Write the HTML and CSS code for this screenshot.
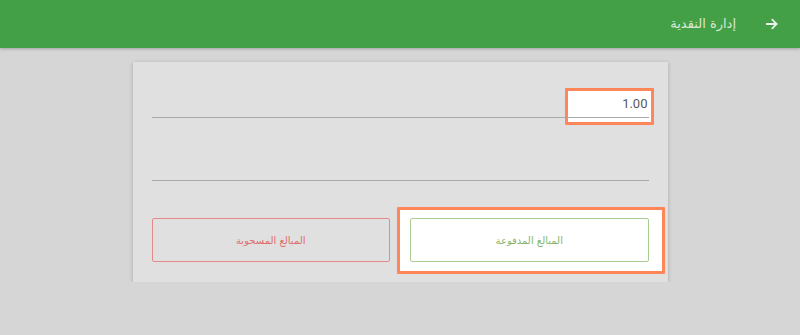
FILE: index.html
```html
<!DOCTYPE html>
<html lang="ar" dir="rtl">
<head>
    <meta charset="UTF-8">
    <meta name="viewport" content="width=device-width, initial-scale=1.0">
    <title>إدارة النقدية</title>
    <link rel="stylesheet" href="styles.css">
</head>
<body>
    <!-- شريط العنوان -->
    <div class="barra">
        <svg class="freccia" width="13" height="12" viewBox="0 0 13 12">
            <path d="M1 6 H11.5 M6.8 1.2 L11.6 6 L6.8 10.8" fill="none" stroke="#e8f2e8" stroke-width="1.8"/>
        </svg>
        <span class="titolo">إدارة النقدية</span>
    </div>
    <!-- البطاقة -->
    <div class="scheda">
        <div class="campo primo">
            <div class="evidenza piccola"></div>
            <input type="text" class="valore" value="1.00" dir="ltr">
            <div class="linea"></div>
        </div>
        <div class="campo secondo">
            <input type="text" class="valore" value="" dir="ltr">
            <div class="linea"></div>
        </div>
        <div class="bottoni">
            <div class="cella">
                <div class="evidenza grande"></div>
                <button class="tasto verde">المبالغ المدفوعة</button>
            </div>
            <div class="cella">
                <button class="tasto rosso">المبالغ المسحوبة</button>
            </div>
        </div>
    </div>
</body>
</html>
```

FILE: styles.css
```css
:root{
    --bg-color: #d6d6d6;
    --card-color: #e0e0e0;
    --green: #43a047;
    --orange: #ff8659;
    --line-color: #a8a8a8;
}
body{
    margin: 0;
    background-color: var(--bg-color);
    font-family: "DejaVu Sans", "Noto Sans", sans-serif;
}
.barra{
    height: 48px;
    background-color: var(--green);
    box-shadow: 0 1px 3px rgba(0,0,0,.25);
    display: flex;
    align-items: center;
    padding-right: 22px;
    gap: 29px;
}
.freccia{
    display: block;
}
.titolo{
    color: #d6e8d6;
    font-size: 13px;
    padding-bottom: 2px;
}
.scheda{
    width: 497px;
    margin: 14px auto 0;
    padding: 0 19px 20px;
    background-color: var(--card-color);
    box-shadow: 0 1px 4px rgba(0,0,0,.22);
}
.campo{
    position: relative;
    display: flex;
    flex-direction: column;
    justify-content: flex-end;
}
.primo{
    height: 56px;
}
.secondo{
    height: 63px;
}
.valore{
    position: relative;
    z-index: 1;
    background: transparent;
    border: 0;
    outline: none;
    padding: 0 1px 6px 0;
    font-family: Roboto, "Liberation Sans", sans-serif;
    font-size: 13px;
    color: #5a5a5a;
    text-align: right;
}
.linea{
    position: relative;
    z-index: 1;
    height: 1px;
    background-color: var(--line-color);
}
.evidenza{
    position: absolute;
    background-color: #ffffff;
    border: 3px solid var(--orange);
    box-sizing: border-box;
    border-radius: 1px;
}
.piccola{
    left: 413px;
    top: 26px;
    width: 89px;
    height: 37px;
}
.bottoni{
    display: flex;
    gap: 20px;
    margin-top: 37px;
}
.cella{
    position: relative;
    flex: 1;
}
.grande{
    top: -11px;
    bottom: -12px;
    left: -13px;
    right: -16px;
}
.tasto{
    position: relative;
    width: 100%;
    height: 44px;
    background: transparent;
    border-radius: 2px;
    font-family: "DejaVu Sans", sans-serif;
    font-size: 10px;
}
.verde{
    border: 1px solid #a9cc93;
    color: #86b56a;
}
.rosso{
    border: 1px solid #e58a88;
    color: #df6e6a;
}
```
